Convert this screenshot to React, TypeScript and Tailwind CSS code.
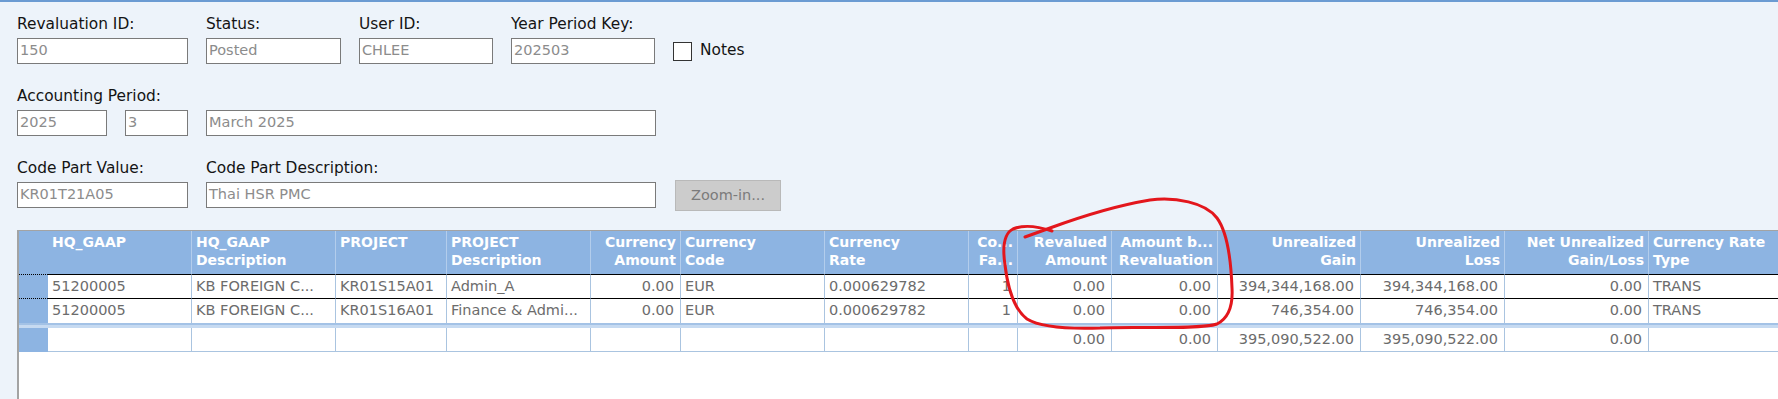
import React from "react";

type Col = { w: string; head: string[]; right?: boolean };

const cols: Col[] = [
  { w: "w-[144px]", head: ["HQ_GAAP"] },
  { w: "w-[144px]", head: ["HQ_GAAP", "Description"] },
  { w: "w-[111px]", head: ["PROJECT"] },
  { w: "w-[144px]", head: ["PROJECT", "Description"] },
  { w: "w-[90px]", head: ["Currency", "Amount"], right: true },
  { w: "w-[144px]", head: ["Currency", "Code"] },
  { w: "w-[144px]", head: ["Currency", "Rate"] },
  { w: "w-[49px]", head: ["Co...", "Fa..."], right: true },
  { w: "w-[94px]", head: ["Revalued", "Amount"], right: true },
  { w: "w-[106px]", head: ["Amount b...", "Revaluation"], right: true },
  { w: "w-[143px]", head: ["Unrealized", "Gain"], right: true },
  { w: "w-[144px]", head: ["Unrealized", "Loss"], right: true },
  { w: "w-[144px]", head: ["Net Unrealized", "Gain/Loss"], right: true },
  { w: "w-[200px]", head: ["Currency Rate", "Type"] },
];

const rows: string[][] = [
  ["51200005", "KB FOREIGN C...", "KR01S15A01", "Admin_A", "0.00", "EUR", "0.000629782", "1", "0.00", "0.00", "394,344,168.00", "394,344,168.00", "0.00", "TRANS"],
  ["51200005", "KB FOREIGN C...", "KR01S16A01", "Finance & Admi...", "0.00", "EUR", "0.000629782", "1", "0.00", "0.00", "746,354.00", "746,354.00", "0.00", "TRANS"],
];

const totals = ["", "", "", "", "", "", "", "", "0.00", "0.00", "395,090,522.00", "395,090,522.00", "0.00", ""];

function Field({ label, w, value }: { label: string; w: string; value: string }) {
  return (
    <div className={`flex flex-col ${w}`}>
      <div className="h-[20px] leading-[20px] text-[15.4px] text-[#141414] whitespace-nowrap">{label}</div>
      <div className="mt-[4px]">
        <Box w={w} value={value} />
      </div>
    </div>
  );
}

function Box({ w, value }: { w: string; value: string }) {
  return (
    <div className={`${w} h-[26px] border border-[#7a7a7a] bg-white pl-[2px] flex items-center text-[14.5px] text-[#8c8c8c] whitespace-nowrap overflow-hidden`}>
      {value}
    </div>
  );
}

function RowHead({ dotted }: { dotted?: boolean }) {
  return (
    <div className={`w-[29px] shrink-0 bg-[#8db4e2] ${dotted ? "border-b border-dotted border-black" : ""}`} />
  );
}

export default function App() {
  return (
    <div className="relative h-[399px] w-full overflow-hidden bg-[#edf3fa] font-['DejaVu_Sans',sans-serif] flex flex-col">
      <div className="h-[2px] bg-[#6b9bd2] shrink-0" />

      <div className="pl-[17px] pt-[12px] flex flex-col gap-[22px] shrink-0">
        <div className="flex items-end gap-[18px]">
          <Field label="Revaluation ID:" w="w-[171px]" value="150" />
          <Field label="Status:" w="w-[135px]" value="Posted" />
          <Field label="User ID:" w="w-[134px]" value="CHLEE" />
          <Field label="Year Period Key:" w="w-[144px]" value="202503" />
          <div className="h-[26px] flex items-center gap-[8px]">
            <div className="w-[19px] h-[19px] border border-[#333] bg-white" />
            <span className="text-[15.4px] text-[#141414]">Notes</span>
          </div>
        </div>

        <div className="flex flex-col">
          <div className="h-[20px] leading-[20px] text-[15.4px] text-[#141414]">Accounting Period:</div>
          <div className="mt-[4px] flex gap-[18px]">
            <Box w="w-[90px]" value="2025" />
            <Box w="w-[63px]" value="3" />
            <Box w="w-[450px]" value="March 2025" />
          </div>
        </div>

        <div className="flex items-end gap-[18px]">
          <Field label="Code Part Value:" w="w-[171px]" value="KR01T21A05" />
          <Field label="Code Part Description:" w="w-[450px]" value="Thai HSR PMC" />
          <div className="ml-[1px] mb-[-3px] w-[106px] h-[31px] bg-[#cccccc] border border-[#b9b9b9] flex items-center justify-center text-[14.5px] text-[#7b7b7b]">
            Zoom-in...
          </div>
        </div>
      </div>

      <div className="mt-[22px] ml-[17px] flex-1 border-l-2 border-t border-[#a3a3a3] bg-white flex flex-col overflow-hidden">
        {/* header */}
        <div className="flex shrink-0 h-[44px] bg-[#8db4e2]">
          <RowHead dotted />
          {cols.map((c, i) => (
            <div
              key={i}
              className={`${c.w} shrink-0 border-r border-[#b3cdec] border-b-black border-b pt-[2px] flex flex-col text-white font-bold text-[14px] leading-[18px] whitespace-nowrap overflow-hidden ${c.right ? "items-end pr-[4px]" : "items-start pl-[4px]"}`}
            >
              {c.head.map((t, j) => (
                <span key={j}>{t}</span>
              ))}
            </div>
          ))}
        </div>

        {rows.map((r, ri) => (
          <div key={ri} className="flex shrink-0 h-[24px]">
            {ri === 0 ? <RowHead dotted /> : <RowHead />}
            {cols.map((c, i) => (
              <div
                key={i}
                className={`${c.w} shrink-0 border-r border-[#aac4e0] ${ri === 0 ? "border-b border-b-black" : ""} flex items-center text-[14.5px] text-[#6c6c6c] whitespace-nowrap overflow-hidden ${c.right ? "justify-end pr-[6px]" : "pl-[4px]"}`}
              >
                {r[i]}
              </div>
            ))}
          </div>
        ))}

        <div className="h-[5px] shrink-0 border-t-2 border-[#a3c2e6] bg-[#c6daf1]" />

        <div className="flex shrink-0 h-[24px]">
          <RowHead />
          {cols.map((c, i) => (
            <div
              key={i}
              className={`${c.w} shrink-0 border-r border-b border-[#aac4e0] flex items-center text-[14.5px] text-[#6c6c6c] whitespace-nowrap overflow-hidden ${c.right ? "justify-end pr-[6px]" : "pl-[4px]"}`}
            >
              {totals[i]}
            </div>
          ))}
        </div>
        <div className="flex-1 bg-white" />
      </div>

      <svg className="absolute inset-0 pointer-events-none" width="1778" height="399" viewBox="0 0 1778 399">
        <path
          d="M1025 237 L1050 228 C1080 217 1120 205 1150 200 C1175 197 1205 202 1217 218 C1228 233 1231 260 1232 288 C1233 305 1229 318 1217 324 C1200 330 1130 326 1100 328 C1070 329 1040 327 1027 319 C1015 310 1008 290 1005 265 C1002 245 1005 233 1013 229 C1025 224 1040 227 1052 231"
          fill="none"
          stroke="#e3161c"
          strokeWidth="3"
          strokeLinecap="round"
          strokeLinejoin="round"
        />
      </svg>
    </div>
  );
}
